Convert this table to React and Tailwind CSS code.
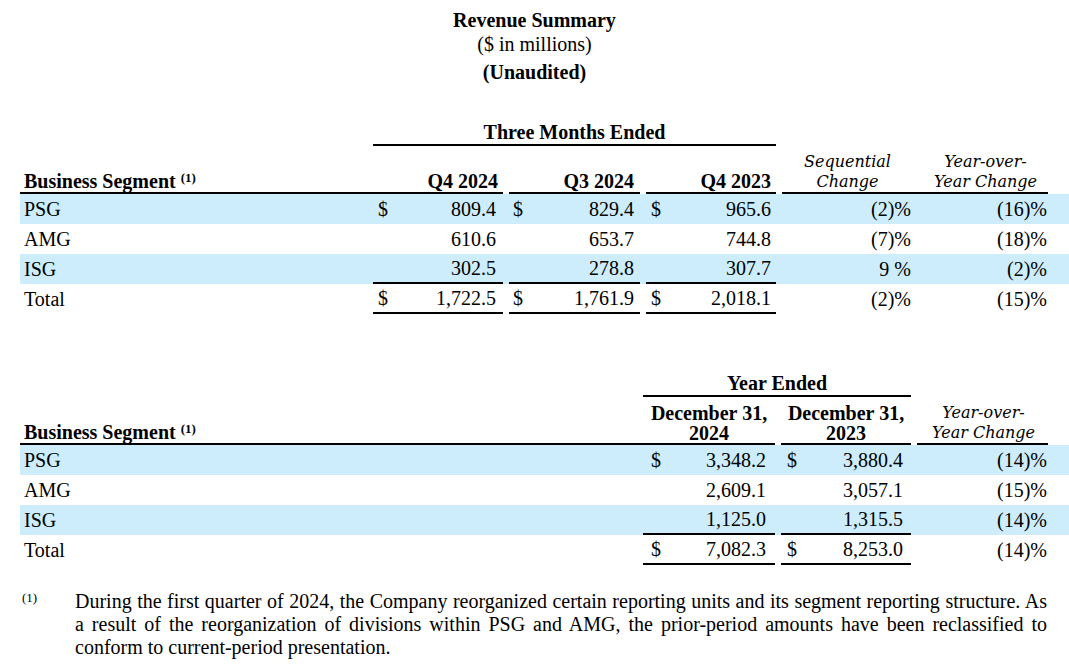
const quarterRows = [
  { name: "PSG", q4: "809.4", q3: "829.4", q4ly: "965.6", seq: "(2)%", yoy: "(16)%", blue: true, dollar: true },
  { name: "AMG", q4: "610.6", q3: "653.7", q4ly: "744.8", seq: "(7)%", yoy: "(18)%" },
  { name: "ISG", q4: "302.5", q3: "278.8", q4ly: "307.7", seq: "9\u00a0%", yoy: "(2)%", blue: true, under: true },
  { name: "Total", q4: "1,722.5", q3: "1,761.9", q4ly: "2,018.1", seq: "(2)%", yoy: "(15)%", dollar: true, under: true },
];

const yearRows = [
  { name: "PSG", y24: "3,348.2", y23: "3,880.4", yoy: "(14)%", blue: true, dollar: true },
  { name: "AMG", y24: "2,609.1", y23: "3,057.1", yoy: "(15)%" },
  { name: "ISG", y24: "1,125.0", y23: "1,315.5", yoy: "(14)%", blue: true, under: true },
  { name: "Total", y24: "7,082.3", y23: "8,253.0", yoy: "(14)%", dollar: true, under: true },
];

const Money = ({ value, dollar, under, pl, pr }) => (
  <div className={`flex items-center justify-between ${pl} ${pr} ${under ? "border-b-2 border-black" : ""}`}>
    <span>{dollar ? "$" : ""}</span>
    <span>{value}</span>
  </div>
);

const SegmentHead = () => (
  <div className="flex items-end border-b-2 border-black pl-1 font-bold">
    <span>
      Business Segment{" "}
      <span className="relative top-[-6px] text-[13px] leading-[0]">(1)</span>
    </span>
  </div>
);

const Italic = ({ children }) => (
  <div className="font-['DejaVu_Serif',serif] text-[16px] italic leading-[20px]">{children}</div>
);

export default function App() {
  return (
    <div className="w-[1069px] h-[672px] bg-white pl-[20px] pt-[8px] text-black font-['Liberation_Serif','Times_New_Roman',serif] text-[20px] leading-[22px]">
      {/* title */}
      <div className="flex flex-col items-center leading-[24px] pr-[20px]">
        <div className="font-bold">Revenue Summary</div>
        <div>($ in millions)</div>
        <div className="mt-[4px] font-bold">(Unaudited)</div>
      </div>

      {/* three months */}
      <div className="mt-[34px] grid grid-cols-[353px_130px_6px_131px_6px_130px_6px_133px_133px]">
        <div className="col-start-2 col-span-5 h-[28px] flex items-end justify-center border-b-2 border-black pb-[1px] font-bold">
          Three Months Ended
        </div>
      </div>
      <div className="grid h-[48px] grid-cols-[353px_130px_6px_131px_6px_130px_6px_133px_133px]">
        <SegmentHead />
        <div className="flex items-end justify-end border-b-2 border-black pr-[5px] font-bold">Q4 2024</div>
        <div />
        <div className="flex items-end justify-end border-b-2 border-black pr-[6px] font-bold">Q3 2024</div>
        <div />
        <div className="flex items-end justify-end border-b-2 border-black pr-[5px] font-bold">Q4 2023</div>
        <div />
        <div className="flex items-end justify-center border-b-2 border-black pr-[2px] text-center">
          <Italic>Sequential<br />Change</Italic>
        </div>
        <div className="flex items-end justify-center border-b-2 border-black pl-[8px] text-center">
          <Italic>Year-over-<br />Year Change</Italic>
        </div>
      </div>
      {quarterRows.map((r) => (
        <div
          key={r.name}
          className={`grid h-[30px] grid-cols-[353px_130px_6px_131px_6px_130px_6px_133px_133px] ${r.blue ? "bg-[#cdedfc]" : ""}`}
        >
          <div className="flex items-center pl-1">{r.name}</div>
          <Money value={r.q4} dollar={r.dollar} under={r.under} pl="pl-[5px]" pr="pr-[7px]" />
          <div />
          <Money value={r.q3} dollar={r.dollar} under={r.under} pl="pl-[4px]" pr="pr-[6px]" />
          <div />
          <Money value={r.q4ly} dollar={r.dollar} under={r.under} pl="pl-[5px]" pr="pr-[5px]" />
          <div />
          <div className="flex items-center justify-end pr-[4px]">{r.seq}</div>
          <div className="flex items-center justify-end pr-[1px]">{r.yoy}</div>
        </div>
      ))}

      {/* year ended */}
      <div className="mt-[55px] grid grid-cols-[623px_132px_6px_130px_6px_131px]">
        <div className="col-start-2 col-span-3 h-[28px] flex items-end justify-center border-b-2 border-black pb-[1px] font-bold">
          Year Ended
        </div>
      </div>
      <div className="grid h-[48px] grid-cols-[623px_132px_6px_130px_6px_131px]">
        <SegmentHead />
        <div className="flex items-end justify-center border-b-2 border-black text-center font-bold leading-[20px]">
          December 31,<br />2024
        </div>
        <div />
        <div className="flex items-end justify-center border-b-2 border-black text-center font-bold leading-[20px]">
          December 31,<br />2023
        </div>
        <div />
        <div className="flex items-end justify-center border-b-2 border-black pl-[2px] text-center">
          <Italic>Year-over-<br />Year Change</Italic>
        </div>
      </div>
      {yearRows.map((r) => (
        <div
          key={r.name}
          className={`grid h-[30px] grid-cols-[623px_132px_6px_130px_6px_131px] ${r.blue ? "bg-[#cdedfc]" : ""}`}
        >
          <div className="flex items-center pl-1">{r.name}</div>
          <Money value={r.y24} dollar={r.dollar} under={r.under} pl="pl-[8px]" pr="pr-[9px]" />
          <div />
          <Money value={r.y23} dollar={r.dollar} under={r.under} pl="pl-[6px]" pr="pr-[8px]" />
          <div />
          <div className="flex items-center justify-end pr-[1px]">{r.yoy}</div>
        </div>
      ))}

      {/* footnote */}
      <div className="mt-[25px] flex leading-[23px]">
        <div className="w-[55px] shrink-0 pl-[2px] text-[13px] leading-[16px]">(1)</div>
        <p className="w-[972px] text-justify">
          During the first quarter of 2024, the Company reorganized certain reporting units and its segment reporting
          structure. As a result of the reorganization of divisions within PSG and AMG, the prior-period amounts have
          been reclassified to conform to current-period presentation.
        </p>
      </div>
    </div>
  );
}
